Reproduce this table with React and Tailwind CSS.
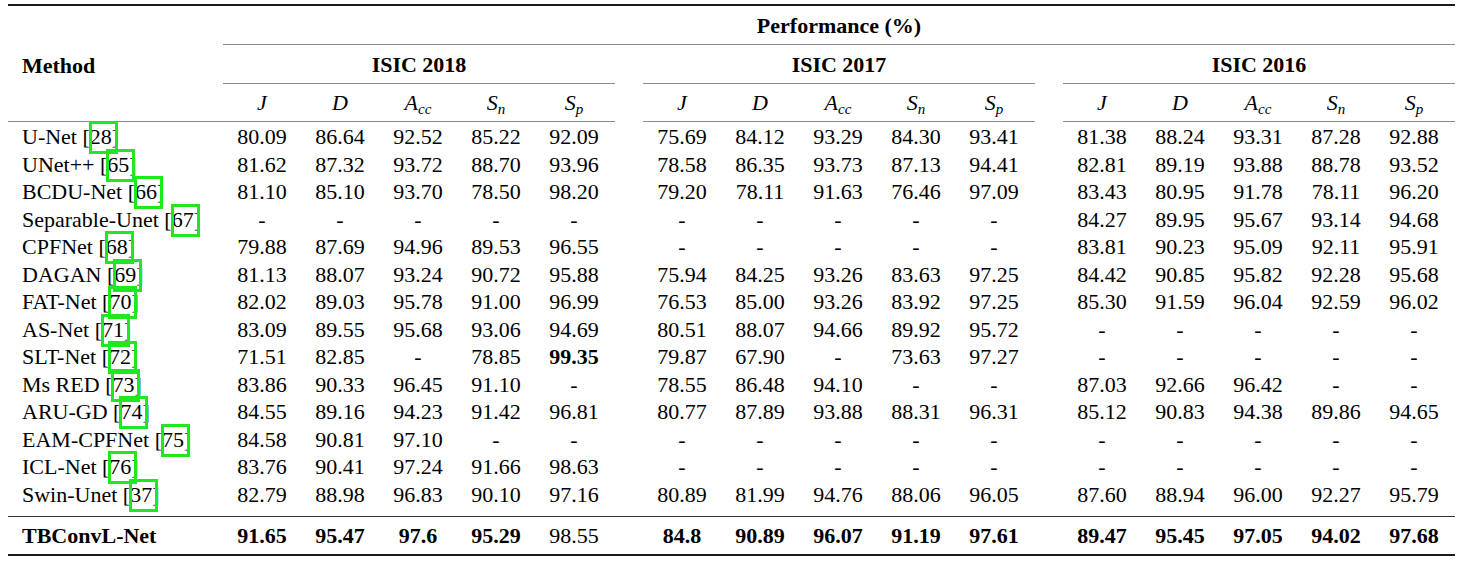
import React from "react";

// rows of the comparison table; "*" marks a bold value
const rows = [
  { name: "U-Net", ref: "28", v: ["80.09 86.64 92.52 85.22 92.09", "75.69 84.12 93.29 84.30 93.41", "81.38 88.24 93.31 87.28 92.88"] },
  { name: "UNet++", ref: "65", v: ["81.62 87.32 93.72 88.70 93.96", "78.58 86.35 93.73 87.13 94.41", "82.81 89.19 93.88 88.78 93.52"] },
  { name: "BCDU-Net", ref: "66", v: ["81.10 85.10 93.70 78.50 98.20", "79.20 78.11 91.63 76.46 97.09", "83.43 80.95 91.78 78.11 96.20"] },
  { name: "Separable-Unet", ref: "67", v: ["- - - - -", "- - - - -", "84.27 89.95 95.67 93.14 94.68"] },
  { name: "CPFNet", ref: "68", v: ["79.88 87.69 94.96 89.53 96.55", "- - - - -", "83.81 90.23 95.09 92.11 95.91"] },
  { name: "DAGAN", ref: "69", v: ["81.13 88.07 93.24 90.72 95.88", "75.94 84.25 93.26 83.63 97.25", "84.42 90.85 95.82 92.28 95.68"] },
  { name: "FAT-Net", ref: "70", v: ["82.02 89.03 95.78 91.00 96.99", "76.53 85.00 93.26 83.92 97.25", "85.30 91.59 96.04 92.59 96.02"] },
  { name: "AS-Net", ref: "71", v: ["83.09 89.55 95.68 93.06 94.69", "80.51 88.07 94.66 89.92 95.72", "- - - - -"] },
  { name: "SLT-Net", ref: "72", v: ["71.51 82.85 - 78.85 *99.35", "79.87 67.90 - 73.63 97.27", "- - - - -"] },
  { name: "Ms RED", ref: "73", v: ["83.86 90.33 96.45 91.10 -", "78.55 86.48 94.10 - -", "87.03 92.66 96.42 - -"] },
  { name: "ARU-GD", ref: "74", v: ["84.55 89.16 94.23 91.42 96.81", "80.77 87.89 93.88 88.31 96.31", "85.12 90.83 94.38 89.86 94.65"] },
  { name: "EAM-CPFNet", ref: "75", v: ["84.58 90.81 97.10 - -", "- - - - -", "- - - - -"] },
  { name: "ICL-Net", ref: "76", v: ["83.76 90.41 97.24 91.66 98.63", "- - - - -", "- - - - -"] },
  { name: "Swin-Unet", ref: "37", v: ["82.79 88.98 96.83 90.10 97.16", "80.89 81.99 94.76 88.06 96.05", "87.60 88.94 96.00 92.27 95.79"] },
];

const ours = ["*91.65 *95.47 *97.6 *95.29 98.55", "*84.8 *90.89 *96.07 *91.19 *97.61", "*89.47 *95.45 *97.05 *94.02 *97.68"];

const Cell = ({ value }) => {
  const bold = value.startsWith("*");
  return (
    <div className={`w-[78px] text-center ${bold ? "font-bold" : ""}`}>
      {bold ? value.slice(1) : value}
    </div>
  );
};

const Group = ({ values }) => (
  <div className="flex w-[392px]">
    {values.split(" ").map((v, i) => (
      <Cell key={i} value={v} />
    ))}
  </div>
);

const MetricHeads = () => (
  <div className="flex w-[392px] h-[38px] items-center border-b border-[#8a8a8a] italic">
    <div className="w-[78px] text-center">J</div>
    <div className="w-[78px] text-center">D</div>
    <div className="w-[78px] text-center">
      A<sub className="text-[15px]">cc</sub>
    </div>
    <div className="w-[78px] text-center">
      S<sub className="text-[15px]">n</sub>
    </div>
    <div className="w-[78px] text-center">
      S<sub className="text-[15px]">p</sub>
    </div>
  </div>
);

// hyperref-style link box round the citation number
const Ref = ({ n }) => (
  <span className="relative">
    {n}
    <span className="absolute left-[-1px] right-[-6px] top-[-3px] h-[33px] border-[3px] border-[#1fe81f]" />
  </span>
);

export default function App() {
  return (
    <div className="w-[1461px] h-[567px] bg-white text-black text-[22px] font-['Liberation_Serif',serif]">
      <div className="ml-2 w-[1447px] pt-1">
        {/* top rule */}
        <div className="h-[2px] bg-[#1a1a1a]" />

        {/* header */}
        <div className="flex">
          <div className="w-[215px] pl-[14px] pt-[4px] flex items-center font-bold border-b border-[#8a8a8a]">
            Method
          </div>
          <div className="w-[1232px] flex flex-col">
            <div className="h-[39px] flex items-center justify-center font-bold border-b border-[#8a8a8a]">
              Performance (%)
            </div>
            <div className="flex gap-[28px] font-bold">
              <div className="w-[392px] h-[39px] flex items-center justify-center border-b border-[#8a8a8a]">ISIC 2018</div>
              <div className="w-[392px] h-[39px] flex items-center justify-center border-b border-[#8a8a8a]">ISIC 2017</div>
              <div className="w-[392px] h-[39px] flex items-center justify-center border-b border-[#8a8a8a]">ISIC 2016</div>
            </div>
            <div className="flex gap-[28px]">
              <MetricHeads />
              <MetricHeads />
              <MetricHeads />
            </div>
          </div>
        </div>

        {/* body */}
        <div className="pt-[1px] pb-[8px]">
          {rows.map((r) => (
            <div key={r.name} className="flex h-[27.5px] leading-[27.5px]">
              <div className="w-[215px] pl-[14px] whitespace-nowrap">
                {r.name} [<Ref n={r.ref} />]
              </div>
              <div className="flex gap-[28px]">
                {r.v.map((g, i) => (
                  <Group key={i} values={g} />
                ))}
              </div>
            </div>
          ))}
        </div>

        <div className="h-[1px] bg-[#333]" />

        <div className="flex h-[37px] items-center">
          <div className="w-[215px] pl-[14px] font-bold">TBConvL-Net</div>
          <div className="flex gap-[28px]">
            {ours.map((g, i) => (
              <Group key={i} values={g} />
            ))}
          </div>
        </div>

        {/* bottom rule */}
        <div className="h-[2px] bg-[#1a1a1a]" />
      </div>
    </div>
  );
}
